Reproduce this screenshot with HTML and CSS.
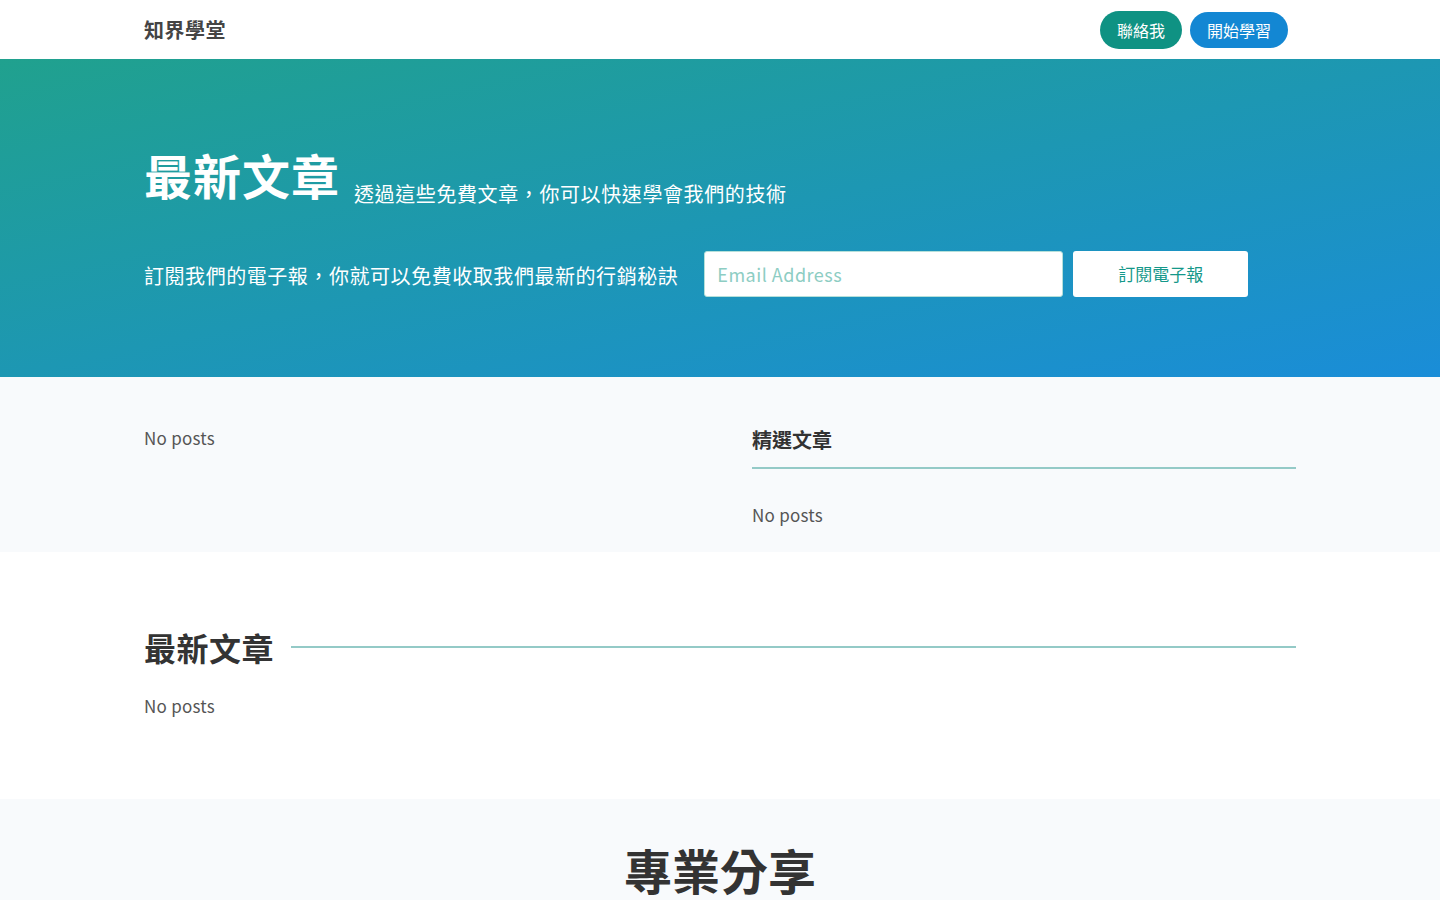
FILE: index.html
```html
<!DOCTYPE html>
<html lang="zh-Hant">

<head>
    <meta charset="UTF-8">
    <meta name="viewport" content="width=device-width, initial-scale=1.0">
    <title>知界學堂</title>
    <link rel="stylesheet" href="styles.css">
</head>

<body>
    <nav class="navbar">
        <div class="container navbar-inner">
            <a class="brand" href="#">知界學堂</a>
            <div class="nav-actions">
                <a class="pill pill-teal" href="#">聯絡我</a>
                <a class="pill pill-blue" href="#">開始學習</a>
            </div>
        </div>
    </nav>

    <header class="hero">
        <div class="container">
            <div class="hero-title">
                <h1>最新文章</h1>
                <p class="hero-sub">透過這些免費文章，你可以快速學會我們的技術</p>
            </div>
            <form class="newsletter">
                <p class="newsletter-text">訂閱我們的電子報，你就可以免費收取我們最新的行銷秘訣</p>
                <input class="email-input" type="email" placeholder="Email Address">
                <button class="subscribe-btn" type="button">訂閱電子報</button>
            </form>
        </div>
    </header>

    <section class="section-gray posts-top">
        <div class="container posts-grid">
            <div class="posts-main">
                <p class="empty">No posts</p>
            </div>
            <aside class="featured">
                <h3 class="featured-title">精選文章</h3>
                <p class="empty">No posts</p>
            </aside>
        </div>
    </section>

    <section class="latest">
        <div class="container">
            <div class="section-heading">
                <h2>最新文章</h2>
                <span class="heading-line"></span>
            </div>
            <p class="empty">No posts</p>
        </div>
    </section>

    <section class="section-gray share">
        <div class="container">
            <h2 class="share-title">專業分享</h2>
        </div>
    </section>
</body>

</html>
```

FILE: styles.css
```css
* {
    box-sizing: border-box;
}

body {
    margin: 0;
    font-family: "Noto Sans CJK TC", "Noto Sans", sans-serif;
    color: #444;
    background: #fff;
}

a {
    text-decoration: none;
}

h1, h2, h3, p {
    margin: 0;
}

.container {
    width: 1152px;
    margin: 0 auto;
}

/* navbar */
.navbar {
    height: 59px;
    background: #fff;
}

.navbar-inner {
    height: 100%;
    display: flex;
    align-items: center;
    justify-content: space-between;
}

.brand {
    font-size: 20px;
    font-weight: 700;
    color: #444;
    letter-spacing: 0.5px;
}

.nav-actions {
    display: flex;
    align-items: center;
    gap: 8px;
    margin-right: 8px;
}

.pill {
    display: inline-block;
    color: #fff;
    font-size: 16px;
    line-height: 24px;
    padding: 7px 17px;
    border-radius: 20px;
}

.pill-teal {
    background: #0f9283;
}

.pill-blue {
    background: #1387d3;
    padding: 6px 17px;
}

/* hero */
.hero {
    height: 318px;
    padding-top: 87px;
    background: linear-gradient(to bottom right, #20a18e, #1a8dd8);
    color: #fff;
}

.hero-title {
    display: flex;
    align-items: flex-end;
    gap: 14px;
}

.hero-title h1 {
    font-size: 48px;
    font-weight: 700;
    line-height: 1.2;
    letter-spacing: 1px;
}

.hero-sub {
    font-size: 20px;
    line-height: 1;
    letter-spacing: 0.6px;
}

.newsletter {
    display: flex;
    align-items: center;
    margin-top: 47px;
}

.newsletter-text {
    font-size: 20px;
    letter-spacing: 0.55px;
    margin-right: 26px;
    padding-top: 4px;
}

.email-input {
    width: 359px;
    height: 46px;
    border: 1px solid #b5e0da;
    border-radius: 3px;
    padding: 0 12px;
    font-family: inherit;
    font-size: 18px;
    letter-spacing: 0.5px;
    color: #444;
}

.email-input::placeholder {
    color: #8dcdc3;
}

.subscribe-btn {
    width: 175px;
    height: 46px;
    margin-left: 10px;
    border: none;
    border-radius: 3px;
    background: #fff;
    color: #14988a;
    font-family: inherit;
    font-size: 17px;
    cursor: pointer;
}

/* sections */
.section-gray {
    background: #f8fafc;
}

.empty {
    font-size: 17px;
    line-height: 1.5;
    color: #555;
    letter-spacing: 0.25px;
}

.posts-top {
    padding: 48px 0 24px;
}

.posts-grid {
    display: grid;
    grid-template-columns: 608px 1fr;
}

.featured-title {
    font-size: 20px;
    font-weight: 700;
    line-height: 1.5;
    color: #333;
    padding-bottom: 12px;
    border-bottom: 2px solid #94cac7;
    margin-bottom: 33px;
}

.latest {
    padding: 73px 0 80px;
}

.section-heading {
    display: flex;
    align-items: center;
    gap: 17px;
    margin-bottom: 24px;
}

.section-heading h2 {
    font-size: 32px;
    font-weight: 700;
    line-height: 1.4;
    color: #333;
    letter-spacing: 0.5px;
}

.heading-line {
    flex: 1;
    height: 2px;
    background: #94cac7;
    margin-top: 0;
}

.share {
    padding: 42px 0 40px;
}

.share-title {
    text-align: center;
    font-size: 48px;
    font-weight: 700;
    line-height: 1.2;
    color: #333;
}
```
